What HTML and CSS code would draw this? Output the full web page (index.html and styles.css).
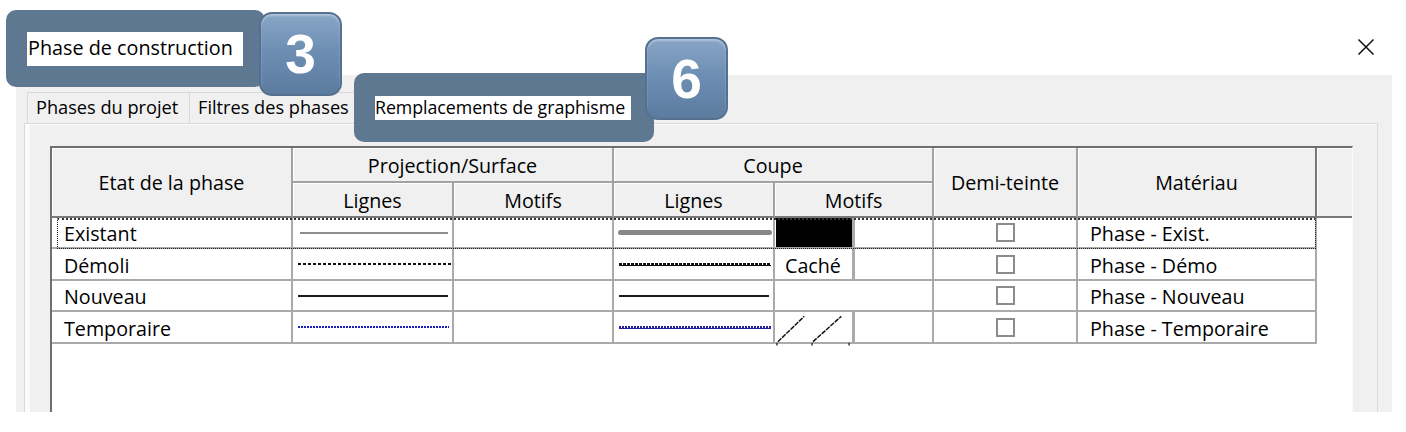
FILE: index.html
```html
<!DOCTYPE html>
<html lang="fr">
<head>
<meta charset="utf-8">
<title>Phase de construction</title>
<link rel="stylesheet" href="styles.css">
</head>
<body>
<div class="window">
  <header class="titlebar">
    <div class="title">Phase de construction</div>
    <button class="close" aria-label="Fermer">
      <svg width="18" height="18" viewBox="0 0 18 18"><path d="M1.5 1.5L16.5 16.5M16.5 1.5L1.5 16.5" stroke="#111" stroke-width="1.5" fill="none"/></svg>
    </button>
  </header>

  <section class="dialog">
    <nav class="tabs">
      <div class="tab">Phases du projet</div>
      <div class="tab">Filtres des phases</div>
      <div class="tab active"><span class="tab-label">Remplacements de graphisme</span></div>
    </nav>
    <div class="panel">
      <div class="grid">
        <div class="h h-etat">Etat de la phase</div>
        <div class="h h-proj">Projection/Surface</div>
        <div class="h h-coupe">Coupe</div>
        <div class="h h-demi">Demi-teinte</div>
        <div class="h h-mat">Matériau</div>
        <div class="h h-fill"></div>
        <div class="h h-sub h-c2">Lignes</div>
        <div class="h h-sub h-c3">Motifs</div>
        <div class="h h-sub h-c4">Lignes</div>
        <div class="h h-sub h-c5">Motifs</div>

        <div class="d name">Existant</div>
        <div class="d line"><div class="ln ln-exist"></div></div>
        <div class="d"></div>
        <div class="d line"><div class="ln cut-exist"></div></div>
        <div class="d motif"><div class="swatch swatch-black"></div><div class="sep"></div></div>
        <div class="d check"><span class="cb"></span></div>
        <div class="d mat">Phase - Exist.</div>
        <div class="blank"></div>

        <div class="d name">Démoli</div>
        <div class="d line"><div class="ln ln-demo"></div></div>
        <div class="d"></div>
        <div class="d line"><div class="ln cut-demo"></div></div>
        <div class="d motif"><div class="swatch swatch-text">Caché</div><div class="sep"></div></div>
        <div class="d check"><span class="cb"></span></div>
        <div class="d mat">Phase - Démo</div>
        <div class="blank"></div>

        <div class="d name">Nouveau</div>
        <div class="d line"><div class="ln ln-new"></div></div>
        <div class="d"></div>
        <div class="d line"><div class="ln cut-new"></div></div>
        <div class="d motif"></div>
        <div class="d check"><span class="cb"></span></div>
        <div class="d mat">Phase - Nouveau</div>
        <div class="blank"></div>

        <div class="d name">Temporaire</div>
        <div class="d line"><div class="ln ln-temp"></div></div>
        <div class="d"></div>
        <div class="d line"><div class="ln cut-temp"></div></div>
        <div class="d motif">
          <div class="swatch swatch-hatch">
            <svg width="78" height="36" viewBox="0 0 78 36"><path d="M2 31L29 5M38 31L67 5" stroke="#111" stroke-width="1.5" stroke-dasharray="5 1" fill="none"/><path d="M1 32V35M37 32V35M75 32V35" stroke="#333" stroke-width="1.5"/></svg>
          </div>
          <div class="sep"></div>
        </div>
        <div class="d check"><span class="cb"></span></div>
        <div class="d mat">Phase - Temporaire</div>
        <div class="blank"></div>

        <div class="focus"></div>
      </div>
    </div>
  </section>

  <div class="callout callout-1"></div>
  <div class="badge badge-3">3</div>
  <div class="callout callout-2"></div>
  <div class="badge badge-6">6</div>
</div>
</body>
</html>
```

FILE: styles.css
```css
* { box-sizing: border-box; }
html, body { margin: 0; padding: 0; }
body {
  background: #fff;
  font-family: "Open Sans", "Noto Sans", sans-serif;
  color: #000;
  width: 1406px;
  height: 432px;
  overflow: hidden;
}
.window {
  position: relative;
  width: 1406px;
  height: 432px;
}

/* title bar */
.titlebar {
  height: 75px;
  display: flex;
  justify-content: space-between;
  align-items: flex-start;
}
.title {
  position: relative;
  z-index: 3;
  margin: 32px 0 0 27px;
  width: 216px;
  height: 34px;
  line-height: 32px;
  padding-left: 1px;
  background: #fff;
  font-size: 19.8px;
  white-space: nowrap;
}
.close {
  margin: 38px 31px 0 0;
  padding: 0;
  border: 0;
  background: transparent;
  width: 18px;
  height: 18px;
  display: flex;
}

/* dialog body */
.dialog {
  margin-left: 16px;
  width: 1376px;
  height: 337px;
  background: #f0f0f0;
  padding-top: 17px;
  overflow: hidden;
}
.tabs {
  display: flex;
  margin-left: 11px;
  height: 31px;
}
.tab {
  height: 31px;
  border: 1px solid #d9d9d9;
  border-bottom: 0;
  border-left: 0;
  background: #f0f0f0;
  font-size: 18.2px;
  line-height: 29px;
  padding: 0 8px 0 8px;
  white-space: nowrap;
}
.tab:first-child { border-left: 1px solid #d9d9d9; width: 163px; }
.tab:nth-child(2) { width: 165px; }
.tab.active {
  width: 290px;
  padding: 3px 0 0 20px;
  background: #fff;
}
.tab-label {
  position: relative;
  z-index: 3;
  display: block;
  width: 256px;
  height: 24px;
  line-height: 22px;
  background: #fff;
  font-size: 17.8px;
  letter-spacing: -0.05px;
}
.panel {
  margin-left: 8px;
  width: 1354px;
  height: 300px;
  border: 1px solid #d9d9d9;
  box-shadow: inset 5px 1px 0 #fbfbfb;
  padding: 22px 0 0 25px;
}

/* data grid */
.grid {
  position: relative;
  width: 1303px;
  height: 300px;
  background: #fff;
  border-left: 2px solid #6f6f6f;
  border-top: 2px solid #6f6f6f;
  border-right: 1px solid #fafafa;
  display: grid;
  grid-template-columns: 241px 161px 160px 161px 159px 144px 239px 35px;
  grid-template-rows: 35px 35px 31px 32px 31px 32px;
  align-content: start;
  font-size: 19.7px;
}
.h {
  background: #f0f0f0;
  border-right: 2px solid #a2a2a2;
  border-bottom: 2px solid #a2a2a2;
  box-shadow: inset 1px 1px 0 #fff;
  display: flex;
  align-items: center;
  justify-content: center;
  white-space: nowrap;
  padding-top: 1px;
}
.h-etat { grid-column: 1; grid-row: 1 / span 2; border-bottom-color: #7a7a7a; }
.h-proj { grid-column: 2 / span 2; grid-row: 1; }
.h-coupe { grid-column: 4 / span 2; grid-row: 1; }
.h-demi { grid-column: 6; grid-row: 1 / span 2; border-bottom-color: #7a7a7a; }
.h-mat { grid-column: 7; grid-row: 1 / span 2; border-right-color: #777; border-bottom-color: #7a7a7a; }
.h-fill { grid-column: 8; grid-row: 1 / span 2; border-right: 0; border-bottom-color: #7a7a7a; }
.h-sub { grid-row: 2; border-bottom-color: #7a7a7a; }
.h-c2 { grid-column: 2; }
.h-c3 { grid-column: 3; }
.h-c4 { grid-column: 4; }
.h-c5 { grid-column: 5; }

.d {
  border-right: 2px solid #aaaaaa;
  border-bottom: 2px solid #aaaaaa;
  display: flex;
  align-items: center;
  white-space: nowrap;
}
.blank { background: #fff; }
.name, .mat { padding-left: 12px; padding-top: 2px; }
.check { justify-content: center; padding-left: 1px; }
.cb {
  width: 19px;
  height: 19px;
  border: 2px solid #8c8c8c;
  background: #fff;
}

/* line samples */
.line { padding: 0; }
.ln { width: 100%; }
.ln-exist { margin: 0 4px 0 7px; height: 2px; background: #8d8d8d; }
.ln-demo {
  margin: 0 1px 0 5px; height: 2px;
  background: repeating-linear-gradient(90deg, #111 0 3px, transparent 3px 5px);
}
.ln-new { margin: 0 4px 0 5px; height: 2px; background: #1c1c1c; }
.ln-temp {
  margin: 0 3px 0 5px; height: 1.5px;
  background: repeating-linear-gradient(90deg, #1d1dba 0 2px, transparent 2px 3px);
}
.cut-exist { margin: 0 1px 0 4px; height: 5px; border-radius: 3px; background: #878787; }
.cut-demo {
  margin: 0 2px 0 5px; height: 3px;
  background:
    repeating-linear-gradient(90deg, #111 0 3px, transparent 3px 4px) top / 100% 2px no-repeat,
    linear-gradient(#111, #111) bottom / 100% 1px no-repeat;
}
.cut-new { margin: 0 4px 0 5px; height: 2px; background: #1c1c1c; }
.cut-temp {
  margin: 0 2px 0 5px; height: 3px;
  background:
    repeating-linear-gradient(90deg, #22229e 0 2px, transparent 2px 3px) top / 100% 2px no-repeat,
    linear-gradient(#22229e, #22229e) bottom / 100% 1px no-repeat;
}

.motif { align-items: stretch; padding-left: 1px; }
.swatch { width: 76px; display: flex; align-items: center; }
.swatch-black { background: #000; }
.swatch-text { padding-left: 9px; padding-top: 2px; }
.swatch-hatch { position: relative; overflow: visible; align-items: flex-end; }
.swatch-hatch svg { display: block; margin-bottom: -5px; }
.sep { width: 3px; background: #ababab; }

.focus {
  position: absolute;
  left: 5px;
  top: 70px;
  width: 1259px;
  height: 31px;
  border: 1px dotted #222;
  border-top: 2px dotted #333;
  pointer-events: none;
}

/* annotation overlays */
.callout {
  position: absolute;
  z-index: 1;
  background: #5f7892;
  border-radius: 10px;
}
.callout-1 { left: 6px; top: 10px; width: 259px; height: 77px; }
.callout-2 { left: 354px; top: 73px; width: 300px; height: 69px; }
.badge {
  position: absolute;
  z-index: 4;
  width: 83px;
  height: 84px;
  border-radius: 13px;
  border: 2px solid #56718f;
  background: linear-gradient(#88a5c6, #6e8fb4 45%, #5b7c9f);
  box-shadow: inset 0 2px 2px rgba(255,255,255,0.35);
  color: #fff;
  font-family: "Liberation Sans", Arial, sans-serif;
  font-weight: bold;
  font-size: 55px;
  display: flex;
  align-items: center;
  justify-content: center;
}
.badge-3 { left: 259px; top: 12px; }
.badge-6 { left: 645px; top: 37px; height: 83px; }
```
